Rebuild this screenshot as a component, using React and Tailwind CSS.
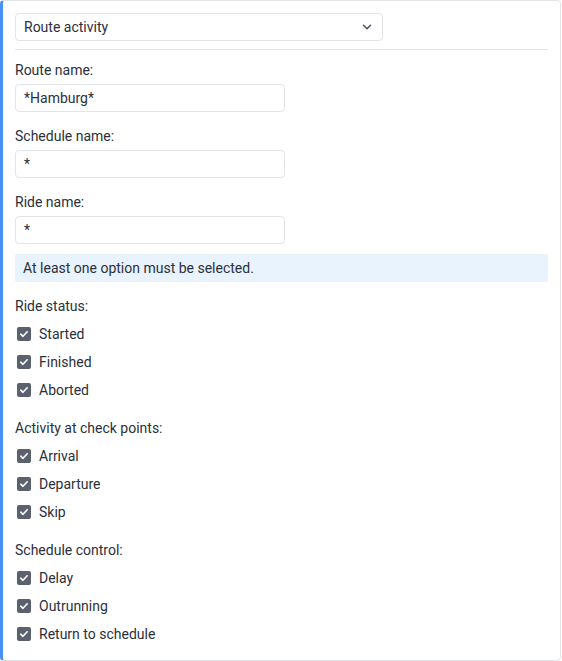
import React, { useState } from 'react'
import { ChevronDown } from 'lucide-react'

const groups = [
  { title: 'Ride status:', items: ['Started', 'Finished', 'Aborted'] },
  { title: 'Activity at check points:', items: ['Arrival', 'Departure', 'Skip'] },
  { title: 'Schedule control:', items: ['Delay', 'Outrunning', 'Return to schedule'] },
]

function Check({ label }) {
  const [on, setOn] = useState(true)
  return (
    <label className="flex items-center h-[28px] cursor-pointer" onClick={() => setOn(!on)}>
      <span className="ml-[2px] w-[14px] h-[14px] rounded-[2px] bg-[#5b616e] flex items-center justify-center">
        {on && (
          <svg width="10" height="10" viewBox="0 0 10 10" fill="none">
            <path d="M1.8 5.2 L4 7.3 L8.2 2.8" stroke="white" strokeWidth="1.6" strokeLinecap="round" strokeLinejoin="round" />
          </svg>
        )}
      </span>
      <span className="ml-[8px]">{label}</span>
    </label>
  )
}

function Field({ label, value }) {
  return (
    <div className="mt-[14px]">
      <div className="h-[20px] leading-[20px]">{label}</div>
      <div className="mt-[4px] w-[270px] h-[28px] border border-[#e2e4e8] rounded-[4px] px-[8px] flex items-center">
        {value}
      </div>
    </div>
  )
}

export default function App() {
  return (
    <div className="bg-white" style={{ fontFamily: 'Roboto, "Liberation Sans", sans-serif' }}>
      <div className="w-[561px] h-[661px] border border-[#e3e5e8] border-l-[3px] border-l-[#4a8ff7] rounded-[4px] pl-[12px] pr-[12px] pt-[12px] text-[14px] text-[#2b303b]">
        <div className="w-[368px] h-[28px] border border-[#e2e4e8] rounded-[4px] pl-[8px] pr-[8px] flex items-center justify-between">
          <span>Route activity</span>
          <ChevronDown size={14} strokeWidth={2.5} className="text-[#4b5160]" />
        </div>
        <div className="mt-[8px] h-px bg-[#e3e5e8]" />
        <div className="mt-[-4px]">
          <Field label="Route name:" value="*Hamburg*" />
          <Field label="Schedule name:" value="*" />
          <Field label="Ride name:" value="*" />
        </div>
        <div className="mt-[10px] h-[28px] bg-[#e8f3fd] rounded-[2px] px-[8px] flex items-center">
          At least one option must be selected.
        </div>
        {groups.map((g) => (
          <div key={g.title} className="mt-[14px]">
            <div className="h-[20px] leading-[20px] mb-[4px]">{g.title}</div>
            {g.items.map((it) => (
              <Check key={it} label={it} />
            ))}
          </div>
        ))}
      </div>
    </div>
  )
}
